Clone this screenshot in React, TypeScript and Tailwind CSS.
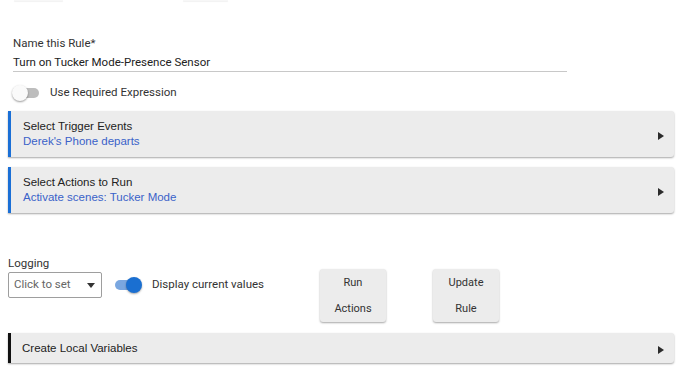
import React from "react";

const roboto = { fontFamily: "Roboto, 'Liberation Sans', sans-serif" };

function Caret() {
  return (
    <svg width="6" height="8" viewBox="0 0 6 8" className="shrink-0">
      <path d="M0 0 L6 4 L0 8 Z" fill="#2b2b2b" />
    </svg>
  );
}

interface SectionCardProps {
  title: string;
  subtitle?: string;
  accent: string;
}

function SectionCard({ title, subtitle, accent }: SectionCardProps) {
  return (
    <div
      className={`mx-[8px] w-[666px] flex items-center bg-[#ececec] rounded-r-[3px] shadow-[0_1px_2px_rgba(0,0,0,0.35)] border-l-[3px] ${accent} font-['Liberation_Sans',Arial,sans-serif]`}
    >
      {subtitle ? (
        <div className="flex-1 pl-[12px] pt-[7px] pb-[8px]">
          <div className="text-[11.5px] leading-[16px] text-[#222]">{title}</div>
          <div className="text-[11.5px] leading-[15px] text-[#3a62c9]">{subtitle}</div>
        </div>
      ) : (
        <div className="flex-1 pl-[11px] py-[7px] text-[11.5px] leading-[16px] text-[#222]">{title}</div>
      )}
      <div className="pr-[10px] pt-[4px]">
        <Caret />
      </div>
    </div>
  );
}

function ActionButton({ top, bottom }: { top: string; bottom: string }) {
  return (
    <div className="w-[66px] h-[53px] flex flex-col items-center justify-center gap-[10px] bg-[#ececec] rounded-[3px] shadow-[0_1px_2px_rgba(0,0,0,0.35)] text-[11px] leading-[16px] text-[#333]">
      <span>{top}</span>
      <span>{bottom}</span>
    </div>
  );
}

export default function App() {
  return (
    <div className="w-[690px] h-[369px] bg-white overflow-hidden" style={roboto}>
      {/* bottoms of the buttons scrolled above */}
      <div className="flex h-[2px]">
        <div className="ml-[14px] w-[49px] h-[1px] bg-[#f7f7f7] shadow-[0_1px_1px_rgba(0,0,0,0.06)]" />
        <div className="ml-[120px] w-[45px] h-[1px] bg-[#f7f7f7] shadow-[0_1px_1px_rgba(0,0,0,0.06)]" />
      </div>

      {/* rule name */}
      <div className="mt-[33px] ml-[13px] w-[554px]">
        <div className="text-[11.5px] leading-[16px] text-[#333]">Name this Rule*</div>
        <div className="mt-[2px] h-[19px] border-b border-[#c8c8c8] text-[11.5px] leading-[18px] text-[#222]">
          Turn on Tucker Mode-Presence Sensor
        </div>
      </div>

      {/* required expression toggle */}
      <div className="mt-[12px] ml-[12px] flex items-center h-[18px]">
        <div className="relative w-[27px] h-[16px] flex items-center">
          <div className="ml-[2px] w-[25px] h-[10px] rounded-full bg-[#bdbdbd]" />
          <div className="absolute left-0 top-0 w-[16px] h-[16px] rounded-full bg-[#fafafa] shadow-[0_1px_2px_rgba(0,0,0,0.4)]" />
        </div>
        <span className="ml-[11px] text-[11.5px] text-[#333]">Use Required Expression</span>
      </div>

      <div className="mt-[9px] flex flex-col gap-[10px]">
        <SectionCard
          title="Select Trigger Events"
          subtitle="Derek's Phone departs"
          accent="border-[#1a6fd6]"
        />
        <SectionCard
          title="Select Actions to Run"
          subtitle="Activate scenes: Tucker Mode"
          accent="border-[#1a6fd6]"
        />
      </div>

      {/* logging + buttons */}
      <div className="mt-[42px] ml-[8px] flex items-start">
        <div className="w-[94px]">
          <div className="text-[11.5px] leading-[16px] text-[#333]">Logging</div>
          <div className="mt-[1px] h-[26px] flex items-center justify-between border border-[#9e9e9e] rounded-[2px] pl-[5px] pr-[6px]">
            <span className="text-[11.5px] text-[#666]">Click to set</span>
            <svg width="8" height="5" viewBox="0 0 8 5">
              <path d="M0 0 L8 0 L4 5 Z" fill="#333" />
            </svg>
          </div>
        </div>
        <div className="w-[218px] mt-[21px] pl-[13px] flex items-center">
          <div className="relative w-[27px] h-[16px] flex items-center">
            <div className="w-[24px] h-[10px] rounded-full bg-[#7aa7e0]" />
            <div className="absolute right-0 top-0 w-[16px] h-[16px] rounded-full bg-[#1a6fd1] shadow-[0_1px_2px_rgba(0,0,0,0.35)]" />
          </div>
          <span className="ml-[10px] text-[11.5px] text-[#333]">Display current values</span>
        </div>
        <div className="mt-[14px] flex gap-[47px]">
          <ActionButton top="Run" bottom="Actions" />
          <ActionButton top="Update" bottom="Rule" />
        </div>
      </div>

      <div className="mt-[11px]">
        <SectionCard title="Create Local Variables" accent="border-[#111] border-l-[2px]" />
      </div>
    </div>
  );
}
